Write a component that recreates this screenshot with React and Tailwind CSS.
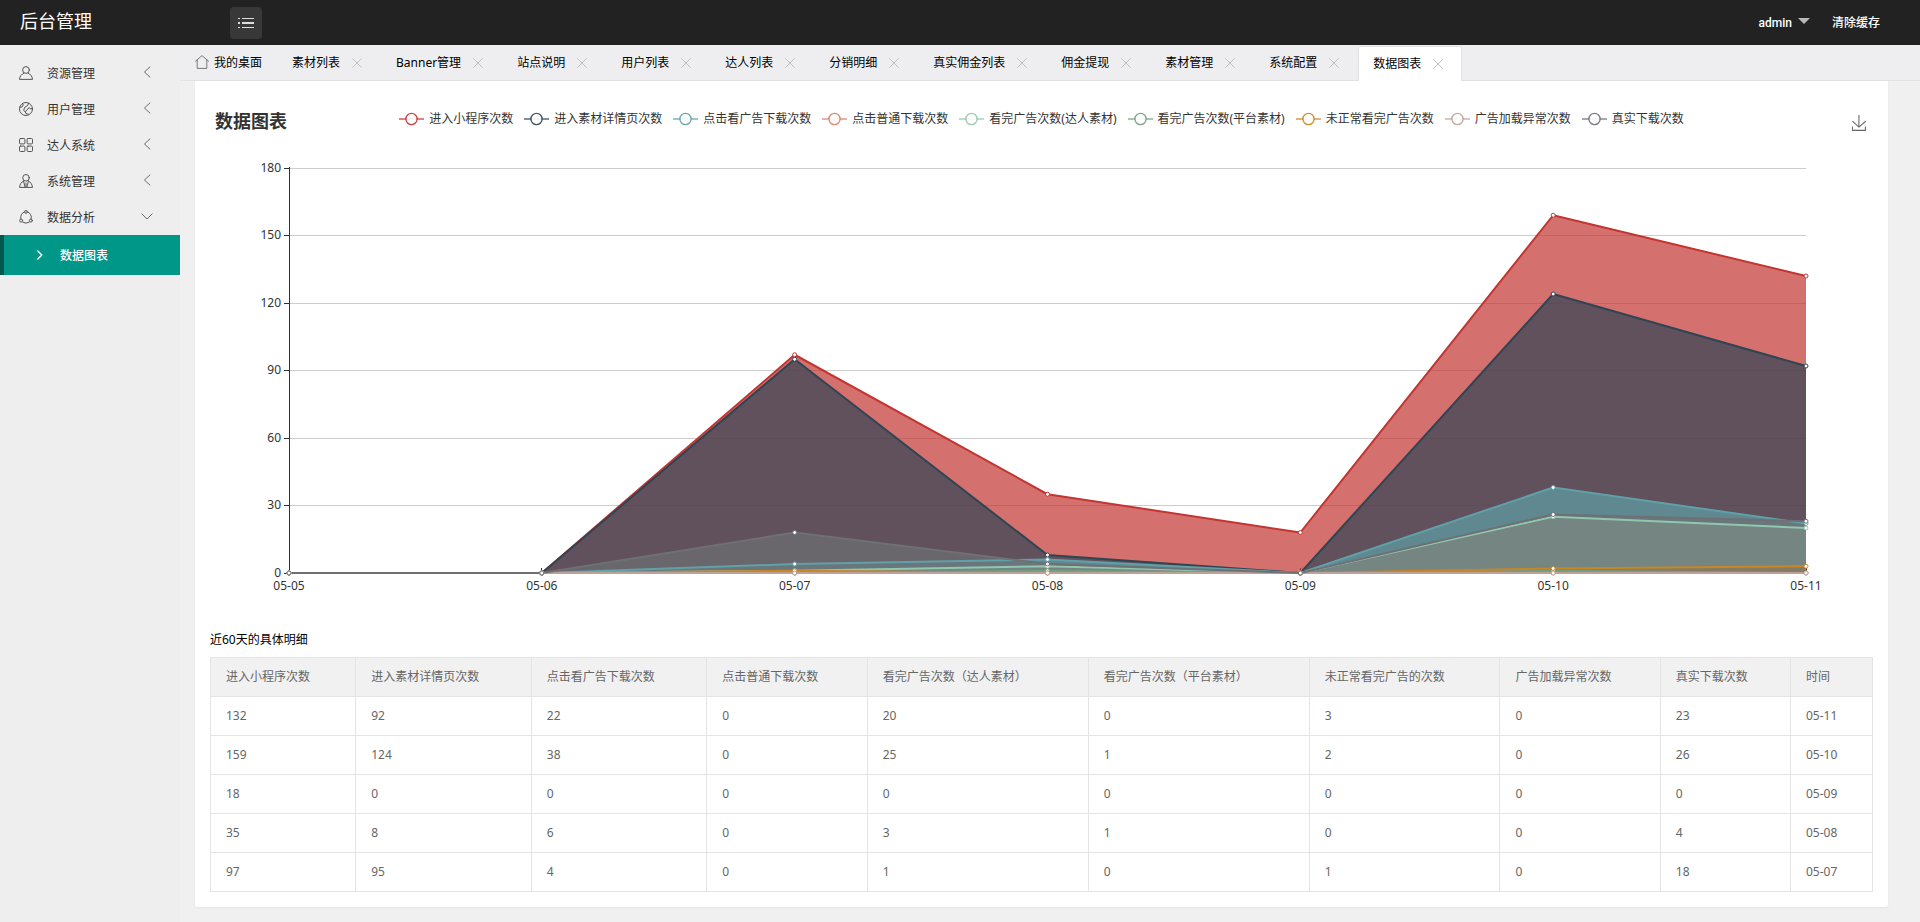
import { useEffect, useRef, useState } from 'react';

const tabs = [
  '素材列表', 'Banner管理', '站点说明', '用户列表', '达人列表', '分销明细',
  '真实佣金列表', '佣金提现', '素材管理', '系统配置', '数据图表',
];

const days = ['05-05', '05-06', '05-07', '05-08', '05-09', '05-10', '05-11'];

const series = [
  { name: '进入小程序次数', color: '#c23531', data: [0, 0, 97, 35, 18, 159, 132] },
  { name: '进入素材详情页次数', color: '#2f4554', data: [0, 0, 95, 8, 0, 124, 92] },
  { name: '点击看广告下载次数', color: '#61a0a8', data: [0, 0, 4, 6, 0, 38, 22] },
  { name: '点击普通下载次数', color: '#d48265', data: [0, 0, 0, 0, 0, 0, 0] },
  { name: '看完广告次数(达人素材)', color: '#91c7ae', data: [0, 0, 1, 3, 0, 25, 20] },
  { name: '看完广告次数(平台素材)', color: '#749f83', data: [0, 0, 0, 1, 0, 1, 0] },
  { name: '未正常看完广告次数', color: '#ca8622', data: [0, 0, 1, 0, 0, 2, 3] },
  { name: '广告加载异常次数', color: '#bda29a', data: [0, 0, 0, 0, 0, 0, 0] },
  { name: '真实下载次数', color: '#6e7074', data: [0, 0, 18, 4, 0, 26, 23] },
];

const columns = [
  '进入小程序次数', '进入素材详情页次数', '点击看广告下载次数', '点击普通下载次数', '看完广告次数（达人素材）',
  '看完广告次数（平台素材）', '未正常看完广告的次数', '广告加载异常次数', '真实下载次数', '时间',
];

const rows = [
  [132, 92, 22, 0, 20, 0, 3, 0, 23, '05-11'],
  [159, 124, 38, 0, 25, 1, 2, 0, 26, '05-10'],
  [18, 0, 0, 0, 0, 0, 0, 0, 0, '05-09'],
  [35, 8, 6, 0, 3, 1, 0, 0, 4, '05-08'],
  [97, 95, 4, 0, 1, 0, 1, 0, 18, '05-07'],
];

const Icon = ({ children, size = 14, className = '' }) => (
  <svg
    width={size}
    height={size}
    viewBox="0 0 14 14"
    fill="none"
    stroke="currentColor"
    strokeLinecap="round"
    strokeLinejoin="round"
    className={`shrink-0 ${className}`}
    aria-hidden="true"
  >
    {children}
  </svg>
);

const UserIcon = () => (
  <Icon>
    <circle cx="7" cy="4" r="3.4" />
    <path d="M4.8 7.2C2.4 8.2.8 10.2.5 13.4h13C13.2 10.2 11.6 8.2 9.2 7.2" />
  </Icon>
);

const FaceIcon = () => (
  <Icon>
    <circle cx="7" cy="7" r="6.5" />
    <path d="M9.6 1.2 8.6 3.6 5.8 5.2 4.6 8.4 6.2 9.6 8 8.2 9 6.4l1.6-.6 1 1.2 1.8-.6M6.2 9.6l.8 2 2.4.6M1 5l1.8.2L4.2 3 3.8 1.6" />
  </Icon>
);

const GridIcon = () => (
  <Icon>
    <rect x=".5" y=".5" width="5.4" height="5.4" rx="1" />
    <rect x="8.1" y=".5" width="5.4" height="5.4" rx="1" />
    <rect x=".5" y="8.1" width="5.4" height="5.4" rx="1" />
    <rect x="8.1" y="8.1" width="5.4" height="5.4" rx="1" />
  </Icon>
);

const AdminIcon = () => (
  <Icon>
    <circle cx="7" cy="3.8" r="3.3" />
    <path d="M4.6 7C2.2 8.2.8 10.4.5 13.4h13C13.2 10.4 11.8 8.2 9.4 7M4.6 7.2 6 13M9.4 7.2 8 13M7 9v4" />
  </Icon>
);

const ShareIcon = () => (
  <Icon>
    <path d="M5.3 1.9A5.6 5.6 0 0 0 1.8 8.6M8.7 1.9a5.6 5.6 0 0 1 3.5 6.7M3.8 12.2a5.6 5.6 0 0 0 6.4 0" />
    <circle cx="7" cy="1.9" r="1.4" />
    <circle cx="2.1" cy="10.6" r="1.5" />
    <circle cx="11.9" cy="10.6" r="1.5" />
  </Icon>
);

const menus = [
  { name: '资源管理', icon: UserIcon },
  { name: '用户管理', icon: FaceIcon },
  { name: '达人系统', icon: GridIcon },
  { name: '系统管理', icon: AdminIcon },
  { name: '数据分析', icon: ShareIcon, children: ['数据图表'] },
];

const Header = () => (
  <header className="flex h-[45px] items-center justify-between bg-[#222] font-['Roboto','Noto_Sans_CJK_SC',sans-serif] text-white">
    <div className="flex items-center">
      <a href="#" className="w-[230px] pb-[2px] pl-5 text-lg leading-6">后台管理</a>
      <button type="button" aria-label="菜单" className="mt-px flex h-8 w-8 items-center justify-center rounded-sm bg-[#383838]">
        <svg width="16" height="10" viewBox="0 0 16 10" fill="#ddd" aria-hidden="true">
          <path d="M0 0h2v1H0zM4 0h12v1H4zM0 4h2v2H0zM4 4h12v2H4zM0 9h2v1H0zM4 9h12v1H4z" />
        </svg>
      </button>
    </div>
    <nav className="flex items-center gap-[22px] pr-10 font-medium leading-5">
      <a href="#" className="flex items-center gap-[6px]">
        admin
        <svg width="12" height="6" viewBox="0 0 12 6" fill="#b8b8b8" className="mb-1" aria-hidden="true">
          <path d="M0 0h12L6 6z" />
        </svg>
      </a>
      <a href="#">清除缓存</a>
    </nav>
  </header>
);

const Sidebar = () => (
  <aside className="w-[180px] shrink-0 bg-[#eee] pt-[10px] text-[#333]">
    {menus.map(({ name, icon: MenuIcon, children }) => (
      <div key={name}>
        <button type="button" className="flex h-9 w-full items-center pl-[19px] pr-[27px]">
          <span className="text-[#555]"><MenuIcon /></span>
          <span className="ml-[14px] flex-1 pt-[2px] text-left">{name}</span>
          <Icon size={12} className="mb-[2px] text-[#555]">
            <path d={children ? 'M1 4.5 7 10.5 13 4.5' : 'M10.5 1 4 7 10.5 13'} />
          </Icon>
        </button>
        {children?.map((child) => (
          <a key={child} href="#" className="flex h-10 items-center border-l-4 border-[#04564e] bg-[#009688] pl-[31px] font-medium text-white">
            <Icon size={10} className="mr-[15px]">
              <path d="M4 1.5 9.5 7 4 12.5" strokeWidth="2" />
            </Icon>
            <span className="pt-[2px]">{child}</span>
          </a>
        ))}
      </div>
    ))}
  </aside>
);

const TabBar = () => (
  <nav className="flex h-9 border-b border-[#e2e2e2] bg-[#eeeef0] text-black">
    <a href="#" className="flex items-center gap-[5px] px-[15px]">
      <Icon className="mb-[2px] text-[#777]">
        <path d="M.5 6.2 7 .6l6.5 5.6M2.2 5v8.4h9.6V5" />
      </Icon>
      我的桌面
    </a>
    {tabs.map((tab, i) => (
      <div
        key={tab}
        className={`flex items-center ${
          i === tabs.length - 1
            ? '-mb-px mt-[1px] rounded-t-xs border border-b-0 border-[#e2e2e2] bg-white px-[14px]'
            : 'px-[15px]'
        }`}
      >
        <a href="#">{tab}</a>
        <button type="button" aria-label={`关闭 ${tab}`} className="ml-2 flex w-[18px] justify-center text-[#c2c2c2]">
          <Icon size={10}>
            <path d="M1 1l12 12M13 1 1 13" strokeWidth="1.4" />
          </Icon>
        </button>
      </div>
    ))}
  </nav>
);

const Legend = () => (
  <div className="flex flex-wrap justify-center gap-[11px] pt-[5px]">
    {series.map((s) => (
      <button key={s.name} type="button" className="flex h-[14px] items-center gap-[5px] text-[#333]">
        <svg width="25" height="14" viewBox="0 0 25 14" stroke={s.color} aria-hidden="true">
          <path d="M0 7h25" strokeWidth="2" opacity=".6" />
          <circle cx="12.5" cy="7" r="5.6" fill="#fff" strokeWidth="1.4" opacity=".9" />
        </svg>
        <span className="mb-px leading-[14px]">{s.name}</span>
      </button>
    ))}
  </div>
);

const AreaChart = () => {
  const box = useRef(null);
  const [width, setWidth] = useState(1663);

  useEffect(() => {
    const observer = new ResizeObserver(([entry]) => setWidth(entry.contentRect.width));
    observer.observe(box.current);
    return () => observer.disconnect();
  }, []);

  const left = 79;
  const right = width - 67;
  const top = 31;
  const bottom = 436;
  const x = (i) => left + ((right - left) * i) / (days.length - 1);
  const y = (v) => bottom - ((bottom - top) * v) / 180;
  const line = (data) => data.map((v, i) => `${x(i)},${y(v)}`).join(' ');

  return (
    <div ref={box} className="h-[470px]">
      <svg width={width} height="470" className="block text-xs">
        {[0, 30, 60, 90, 120, 150, 180].map((v) => {
          const gy = Math.floor(y(v)) + 0.5;
          return (
            <g key={v}>
              <path d={`M${left} ${gy}H${right}`} stroke="#ccc" />
              <path d={`M${left - 5} ${gy}H${left}`} stroke="#333" />
              <text x={left - 8} y={gy + 3} textAnchor="end" fill="#333">{v}</text>
            </g>
          );
        })}
        <path d={`M${left + 0.5} ${top - 1}V${bottom}`} stroke="#333" />
        <path d={`M${left} ${bottom + 0.5}H${right}`} stroke="#333" />
        {days.map((day, i) => (
          <g key={day}>
            <path d={`M${Math.floor(x(i)) + 0.5} ${bottom - 5}v5`} stroke="#333" />
            <text x={x(i)} y={bottom + 17} textAnchor="middle" fill="#333">{day}</text>
          </g>
        ))}

        {/* areas, then lines, then points, so no area covers a line */}
        {series.map((s) => (
          <polygon key={s.name} points={`${left},${bottom} ${line(s.data)} ${right},${bottom}`} fill={s.color} opacity="0.7" />
        ))}
        {series.map((s) => (
          <polyline key={s.name} points={line(s.data)} fill="none" stroke={s.color} strokeWidth="2" strokeLinejoin="bevel" />
        ))}
        {series.map((s) => s.data.map((v, i) => (
          <circle key={s.name + i} cx={x(i)} cy={y(v)} r="2" fill="#fff" stroke={s.color} />
        )))}
      </svg>
    </div>
  );
};

const DetailTable = () => (
  <table className="w-full border-collapse bg-white text-left leading-5 text-[#666]">
    <thead>
      <tr className="bg-[#f1f1f1]">
        {columns.map((name) => (
          <th
            key={name}
            className="whitespace-nowrap border border-[#e4e4e4] px-[15px] py-[9px] font-normal last:w-[82px]"
          >
            {name}
          </th>
        ))}
      </tr>
    </thead>
    <tbody>
      {rows.map((row) => (
        <tr key={row[9]}>
          {row.map((cell, i) => (
            <td key={columns[i]} className="border border-[#e4e4e4] px-[15px] py-[9px]">{cell}</td>
          ))}
        </tr>
      ))}
    </tbody>
  </table>
);

const App = () => (
  <div className="flex min-h-screen flex-col bg-[#f0f0f0] font-['Noto_Sans','Noto_Sans_CJK_SC',sans-serif] text-xs">
    <Header />
    <div className="flex flex-1">
      <Sidebar />
      <div className="min-w-0 flex-1">
        <TabBar />
        <main className="mx-[15px] mb-[15px] mr-8 rounded-b-xs bg-white px-[15px] pb-[15px] pt-[26px] shadow-xs">
          <div className="grid min-h-[30px] grid-cols-[1fr_auto_1fr] items-start">
            <h1 className="pl-[5px] pt-[5px] text-lg font-bold leading-[18px] text-[#333]">数据图表</h1>
            <Legend />
            <button type="button" aria-label="保存为图片" className="mr-[7px] mt-2 justify-self-end">
              <svg width="14" height="16" viewBox="3 0 53 60" fill="none" stroke="#666" strokeWidth="4" aria-hidden="true">
                <path d="M4.7 22.9 29.3 45.5 54.7 23.4M4.6 43.6V58H53.8V43.6M29.2 45.1V0" />
              </svg>
            </button>
          </div>
          <AreaChart />
          <h2 className="mb-[7px] mt-[23px] leading-5 text-black">近60天的具体明细</h2>
          <DetailTable />
        </main>
      </div>
    </div>
  </div>
);

export default App;
